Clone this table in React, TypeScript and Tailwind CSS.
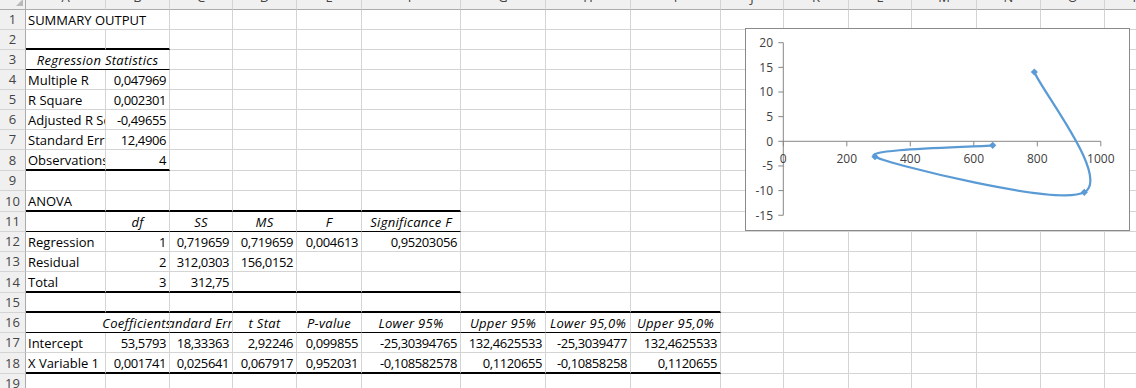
import React from 'react';

type Cell = { t?: string; a?: 'l' | 'r' | 'c'; i?: boolean; span?: number; coef?: boolean; n?: boolean };

const L = (t: string): Cell => ({ t, a: 'l' });
const N = (t: string): Cell => ({ t, a: 'r', n: true });
const H = (t: string): Cell => ({ t, a: 'c', i: true });
const E: Cell = {};

const DATA: Record<number, Cell[]> = {
  1: [{ t: 'SUMMARY OUTPUT', a: 'l', span: 2 }],
  3: [{ t: 'Regression Statistics', a: 'c', i: true, span: 2 }],
  4: [L('Multiple R'), N('0,047969')],
  5: [L('R Square'), N('0,002301')],
  6: [L('Adjusted R Square'), N('-0,49655')],
  7: [L('Standard Error'), N('12,4906')],
  8: [L('Observations'), N('4')],
  10: [L('ANOVA')],
  11: [E, H('df'), H('SS'), H('MS'), H('F'), H('Significance F')],
  12: [L('Regression'), N('1'), N('0,719659'), N('0,719659'), N('0,004613'), N('0,95203056')],
  13: [L('Residual'), N('2'), N('312,0303'), N('156,0152')],
  14: [L('Total'), N('3'), N('312,75')],
  16: [
    { t: 'Coefficients', a: 'c', i: true, span: 2, coef: true },
    H('Standard Error'),
    H('t Stat'),
    H('P-value'),
    H('Lower 95%'),
    H('Upper 95%'),
    H('Lower 95,0%'),
    H('Upper 95,0%'),
  ],
  17: [
    L('Intercept'),
    N('53,5793'),
    N('18,33363'),
    N('2,92246'),
    N('0,099855'),
    N('-25,30394765'),
    N('132,4625533'),
    N('-25,3039477'),
    N('132,4625533'),
  ],
  18: [
    L('X Variable 1'),
    N('0,001741'),
    N('0,025641'),
    N('0,067917'),
    N('0,952031'),
    N('-0,108582578'),
    N('0,1120655'),
    N('-0,10858258'),
    N('0,1120655'),
  ],
};

const LETTERS = ['A', 'B', 'C', 'D', 'E', 'F', 'G', 'H', 'I', 'J', 'K', 'L', 'M', 'N', 'O', 'P'];
const NCOLS = 16;
const ROWS = Array.from({ length: 19 }, (_, i) => i + 1);

const GRID =
  'grid grid-cols-[26px_80px_64px_63px_64px_65px_99px_85px_85px_90px_63px_65px_63px_65px_64px_64px_64px]';

function bottom(r: number, c: number): string {
  const thick =
    ((r === 2 || r === 8) && c <= 1) ||
    ((r === 10 || r === 14) && c <= 5) ||
    ((r === 15 || r === 18) && c <= 8);
  if (thick) return 'border-b-2 border-b-black';
  const thin = (r === 3 && c <= 1) || (r === 11 && c <= 5) || (r === 16 && c <= 8);
  if (thin) return 'border-b border-b-black';
  return 'border-b border-b-[#d4d4d4]';
}

function rowHeight(r: number): string {
  return r === 8 || r === 10 || r === 14 || r === 18 ? 'h-[21px]' : 'h-[20px]';
}

function CellView({ cell, r, c }: { cell: Cell; r: number; c: number }) {
  const span = cell.span === 2 ? 'col-span-2' : '';
  const align =
    cell.a === 'r' ? 'justify-end pr-[3px]' : cell.a === 'c' ? 'justify-center' : 'justify-start pl-[2px]';
  const base = `flex items-end overflow-hidden whitespace-nowrap leading-[17px] border-r border-r-[#d4d4d4] ${bottom(
    r,
    c
  )} ${span}`;
  const txt = `${cell.i ? 'italic tracking-[0.3px]' : ''} ${cell.n ? 'tracking-[-0.4px]' : ''}`;
  if (cell.coef) {
    return (
      <div className={`${base} justify-end`}>
        <div className="w-[64px] shrink-0 flex justify-center">
          <span className={`shrink-0 ${txt}`}>{cell.t}</span>
        </div>
      </div>
    );
  }
  return (
    <div className={`${base} ${align}`}>
      {cell.t ? <span className={`shrink-0 ${txt}`}>{cell.t}</span> : null}
    </div>
  );
}

function Row({ r }: { r: number }) {
  const data = DATA[r] || [];
  const cells: React.ReactNode[] = [];
  let c = 0;
  data.forEach((cell, k) => {
    cells.push(<CellView key={`d${k}`} cell={cell} r={r} c={c} />);
    c += cell.span || 1;
  });
  while (c < NCOLS) {
    cells.push(<CellView key={`e${c}`} cell={E} r={r} c={c} />);
    c += 1;
  }
  return (
    <div className={`${GRID} ${rowHeight(r)}`}>
      <div className="flex items-center justify-center bg-[#f0f0f0] border-r border-r-[#ababab] border-b border-b-[#d4d4d4] text-[#444] leading-[17px]">
        {r}
      </div>
      {cells}
    </div>
  );
}

function HeaderRow() {
  return (
    <div className={`${GRID} h-[10px]`}>
      <div className="relative bg-[#f0f0f0] border-r border-r-[#ababab] border-b border-b-[#ababab]">
        <svg className="absolute left-0 top-0" width="26" height="9" viewBox="0 0 26 9">
          <polygon points="23,-1 23,6 16,6" fill="#b9b9b9" />
        </svg>
      </div>
      {LETTERS.map((l) => (
        <div
          key={l}
          className="overflow-hidden bg-[#f0f0f0] border-r border-r-[#d4d4d4] border-b border-b-[#ababab] text-[#444] text-center"
        >
          <div className="-mt-[11px] leading-[17px]">{l}</div>
        </div>
      ))}
    </div>
  );
}

const Y0 = 141.3;
const YSTEP = 24.65;
const X0 = 783.3;
const XSTEP = 63.5;

const POINTS: [number, number][] = [
  [1034.3, 72],
  [1084.3, 192.3],
  [875, 156.7],
  [992.7, 145.3],
];

function Chart() {
  const yTicks = [20, 15, 10, 5, 0, -5, -10, -15];
  const xTicks = [0, 200, 400, 600, 800, 1000];
  return (
    <div className="absolute left-[745px] top-[28px] w-[385px] h-[203px] bg-white border border-[#8a8a8a]">
      <svg
        className="absolute -left-px -top-px"
        width="385"
        height="203"
        viewBox="745 28 385 203"
        fontFamily="'Open Sans', sans-serif"
        fontSize="12"
      >
        <line x1={X0} y1={Y0 - 4 * YSTEP} x2={X0} y2={Y0 + 3 * YSTEP} stroke="#868686" strokeWidth="1" />
        {yTicks.map((v) => {
          const y = Y0 - (v / 5) * YSTEP;
          return (
            <g key={`y${v}`}>
              <line x1={X0 - 5} y1={y} x2={X0} y2={y} stroke="#868686" strokeWidth="1" />
              <text x={773} y={y + 4.3} textAnchor="end" fill="#404040">
                {v}
              </text>
            </g>
          );
        })}
        <line x1={X0} y1={Y0} x2={X0 + 5 * XSTEP} y2={Y0} stroke="#868686" strokeWidth="1" />
        {xTicks.map((v, k) => {
          const x = X0 + k * XSTEP;
          return (
            <g key={`x${v}`}>
              <line x1={x} y1={Y0} x2={x} y2={Y0 + 5} stroke="#868686" strokeWidth="1" />
              <text x={x} y={163} textAnchor="middle" fill="#404040">
                {v}
              </text>
            </g>
          );
        })}
        <path
          d="M1034.3,72 C1042.6,92 1110.9,178.2 1084.3,192.3 C1057.75,206.4 890.3,164.5 875,156.7 C859.7,148.9 973.1,147.2 992.7,145.3"
          fill="none"
          stroke="#5B9BD5"
          strokeWidth="2.25"
          strokeLinecap="round"
          strokeLinejoin="round"
        />
        {POINTS.map(([x, y], k) => (
          <polygon
            key={k}
            points={`${x},${y - 3.6} ${x + 3.6},${y} ${x},${y + 3.6} ${x - 3.6},${y}`}
            fill="#5B9BD5"
          />
        ))}
      </svg>
    </div>
  );
}

export default function App() {
  return (
    <div className="relative w-[1136px] h-[388px] overflow-hidden bg-white font-['Open_Sans',sans-serif] text-[13px] text-black">
      <HeaderRow />
      {ROWS.map((r) => (
        <Row key={r} r={r} />
      ))}
      <Chart />
    </div>
  );
}
